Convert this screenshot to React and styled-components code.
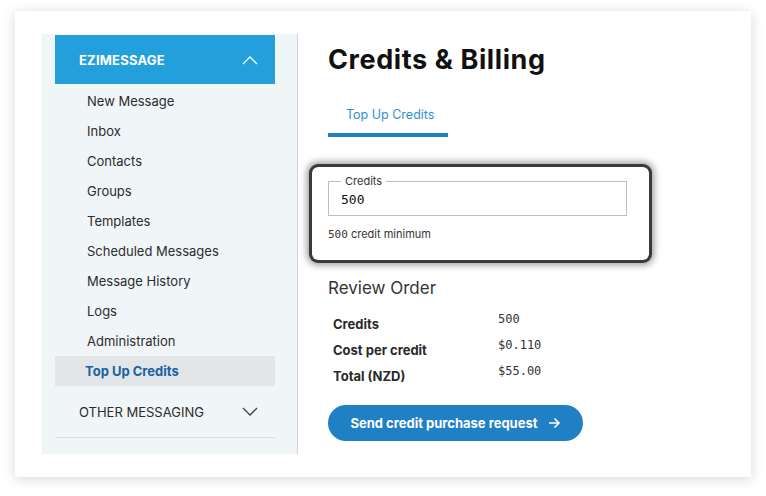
import React from "react";
import styled, { createGlobalStyle } from "styled-components";

const Global = createGlobalStyle`
  html, body { margin: 0; padding: 0; background: #fff; }
  body { font-family: "Inter", "Noto Sans", sans-serif; color: #222; }
  * { box-sizing: border-box; }
`;

const Page = styled.div`
  width: 766px;
  height: 496px;
  padding: 11px 15px 19px 15px;
`;

const Card = styled.div`
  width: 736px;
  height: 466px;
  background: #fff;
  box-shadow: 0 2px 12px rgba(0, 0, 0, 0.16);
  display: flex;
  padding: 23px 0 23px 27px;
  gap: 30px;
`;

const Sidebar = styled.nav`
  width: 256px;
  background: #f0f5f8;
  border-right: 1px solid #d0d4d8;
  padding: 1px 22px 16px 13px;
  display: flex;
  flex-direction: column;
`;

const GroupHeader = styled.div`
  height: 49px;
  background: #239fdb;
  color: #fff;
  display: flex;
  align-items: center;
  justify-content: space-between;
  padding: 0 17px 0 24px;
  font-weight: 700;
  font-size: 13px;
  letter-spacing: 0.2px;
  margin-bottom: 2px;
`;

const MenuItem = styled.div`
  height: 30px;
  display: flex;
  align-items: center;
  padding-left: ${(p) => (p.$active ? "30px" : "32px")};
  font-size: 13px;
  color: ${(p) => (p.$active ? "#1a62a0" : "#2c2c2c")};
  font-weight: ${(p) => (p.$active ? 700 : 400)};
  background: ${(p) => (p.$active ? "#e2e6e9" : "transparent")};
`;

const OtherGroup = styled.div`
  height: 52px;
  display: flex;
  align-items: center;
  justify-content: space-between;
  padding: 0 17px 0 24px;
  font-size: 13px;
  color: #2c2c2c;
  border-bottom: 1px solid #d8dde1;
`;

const Main = styled.main`
  flex: 1;
  display: flex;
  flex-direction: column;
  padding-top: 9px;
`;

const Title = styled.h1`
  margin: 0;
  font-family: "Inter", sans-serif;
  font-weight: 700;
  font-size: 27px;
  letter-spacing: 0.6px;
  color: #111;
  line-height: 34px;
`;

const Tabs = styled.div`
  margin-top: 24px;
  display: flex;
`;

const Tab = styled.div`
  width: 120px;
  height: 36px;
  padding-left: 18px;
  padding-top: 6px;
  font-size: 12.5px;
  color: #2f8fd0;
  border-bottom: 4px solid #2080c4;
`;

const FocusBox = styled.div`
  margin-top: 30px;
  margin-left: -16px;
  width: 337px;
  padding: 7px 22px 19px 16px;
  border-radius: 6px;
  box-shadow: 0 0 0 3px #3a3a3a, 0 0 7px 5px rgba(0, 0, 0, 0.4);
`;

const Fieldset = styled.fieldset`
  margin: 0;
  border: 1px solid #bdbdbd;
  padding: 0 12px 5px 12px;
  height: 42px;
`;

const Legend = styled.legend`
  font-size: 11px;
  color: #333;
  padding: 0 4px;
  margin-left: 0;
`;

const Value = styled.div`
  font-family: "DejaVu Sans Mono", monospace;
  font-size: 13px;
  color: #111;
  line-height: 16px;
  padding-top: 4px;
`;

const Hint = styled.div`
  margin-top: 11px;
  font-size: 11px;
  color: #333;
`;

const Mono = styled.span`
  font-family: "DejaVu Sans Mono", monospace;
  font-size: 11px;
`;

const Section = styled.h2`
  margin: 18px 0 0 0;
  font-size: 17px;
  font-weight: 400;
  color: #333;
`;

const Table = styled.div`
  margin-top: 14px;
  display: grid;
  grid-template-columns: 165px auto;
  row-gap: 6px;
  padding-left: 5px;
`;

const Label = styled.div`
  font-size: 13px;
  font-weight: 700;
  color: #2a2a2a;
  height: 20px;
  line-height: 20px;
  padding-top: 2px;
`;

const Amount = styled.div`
  font-family: "DejaVu Sans Mono", monospace;
  font-size: 12px;
  color: #333;
  transform: translateY(-3px);
  line-height: 20px;
`;

const Button = styled.button`
  margin-top: 21px;
  align-self: flex-start;
  width: 255px;
  height: 36px;
  border: none;
  border-radius: 18px;
  background: #2080c4;
  color: #fff;
  font-family: "Inter", sans-serif;
  font-weight: 700;
  font-size: 13px;
  display: flex;
  align-items: center;
  justify-content: center;
  gap: 10px;
  padding: 0;
`;

const Chevron = ({ up, color }) => (
  <svg width="16" height="10" viewBox="0 0 16 10" fill="none">
    <path
      d={up ? "M1 9 L8 2 L15 9" : "M1 1 L8 8 L15 1"}
      stroke={color}
      strokeWidth="1.3"
    />
  </svg>
);

const Arrow = () => (
  <svg width="13" height="12" viewBox="0 0 13 12" fill="none">
    <path d="M1 6 H11 M6.5 1.5 L11 6 L6.5 10.5" stroke="#fff" strokeWidth="1.5" />
  </svg>
);

const items = [
  "New Message",
  "Inbox",
  "Contacts",
  "Groups",
  "Templates",
  "Scheduled Messages",
  "Message History",
  "Logs",
  "Administration",
];

const rows = [
  ["Credits", "500"],
  ["Cost per credit", "$0.110"],
  ["Total (NZD)", "$55.00"],
];

export default function App() {
  return (
    <>
      <Global />
      <Page>
        <Card>
          <Sidebar>
            <GroupHeader>
              EZIMESSAGE
              <Chevron up color="#fff" />
            </GroupHeader>
            {items.map((t) => (
              <MenuItem key={t}>{t}</MenuItem>
            ))}
            <MenuItem $active>Top Up Credits</MenuItem>
            <OtherGroup>
              OTHER MESSAGING
              <Chevron color="#444" />
            </OtherGroup>
          </Sidebar>
          <Main>
            <Title>Credits &amp; Billing</Title>
            <Tabs>
              <Tab>Top Up Credits</Tab>
            </Tabs>
            <FocusBox>
              <Fieldset>
                <Legend>Credits</Legend>
                <Value>500</Value>
              </Fieldset>
              <Hint>
                <Mono>500</Mono> credit minimum
              </Hint>
            </FocusBox>
            <Section>Review Order</Section>
            <Table>
              {rows.map(([l, v]) => (
                <React.Fragment key={l}>
                  <Label>{l}</Label>
                  <Amount>{v}</Amount>
                </React.Fragment>
              ))}
            </Table>
            <Button>
              Send credit purchase request
              <Arrow />
            </Button>
          </Main>
        </Card>
      </Page>
    </>
  );
}
